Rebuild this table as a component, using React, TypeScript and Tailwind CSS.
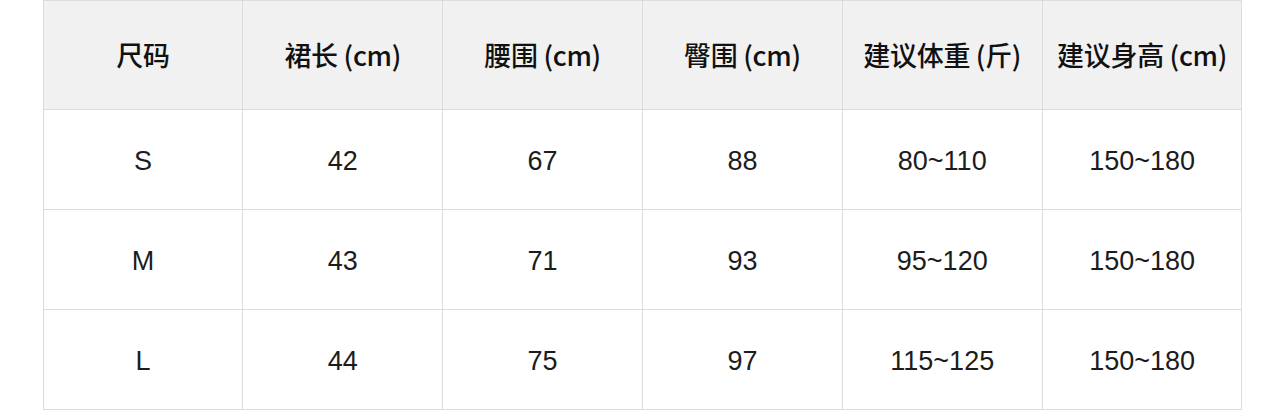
const headers = ['尺码', '裙长 (cm)', '腰围 (cm)', '臀围 (cm)', '建议体重 (斤)', '建议身高 (cm)'];

const rows = [
  ['S', '42', '67', '88', '80~110', '150~180'],
  ['M', '43', '71', '93', '95~120', '150~180'],
  ['L', '44', '75', '97', '115~125', '150~180'],
];

export default function App() {
  return (
    <div className="w-[1285px] h-[410px] bg-white font-['Liberation_Sans','Noto_Sans_CJK_SC',sans-serif]">
      <div className="mx-auto w-[1200px] grid grid-cols-6 border-l border-[#dcdcdc]">
        {headers.map((h) => (
          <div
            key={h}
            className="h-[110px] flex items-center justify-center bg-[#f1f1f1] border-t border-b border-r border-[#dcdcdc] text-[27px] font-medium text-[#111] tracking-[-0.3px] font-['Noto_Sans_CJK_SC',sans-serif]"
          >
            {h}
          </div>
        ))}
        {rows.map((row) =>
          row.map((cell, i) => (
            <div
              key={row[0] + i}
              className="h-[100px] pt-[3px] flex items-center justify-center border-b border-r border-[#dcdcdc] text-[27px] text-[#1c1c1c]"
            >
              {cell}
            </div>
          ))
        )}
      </div>
    </div>
  );
}
